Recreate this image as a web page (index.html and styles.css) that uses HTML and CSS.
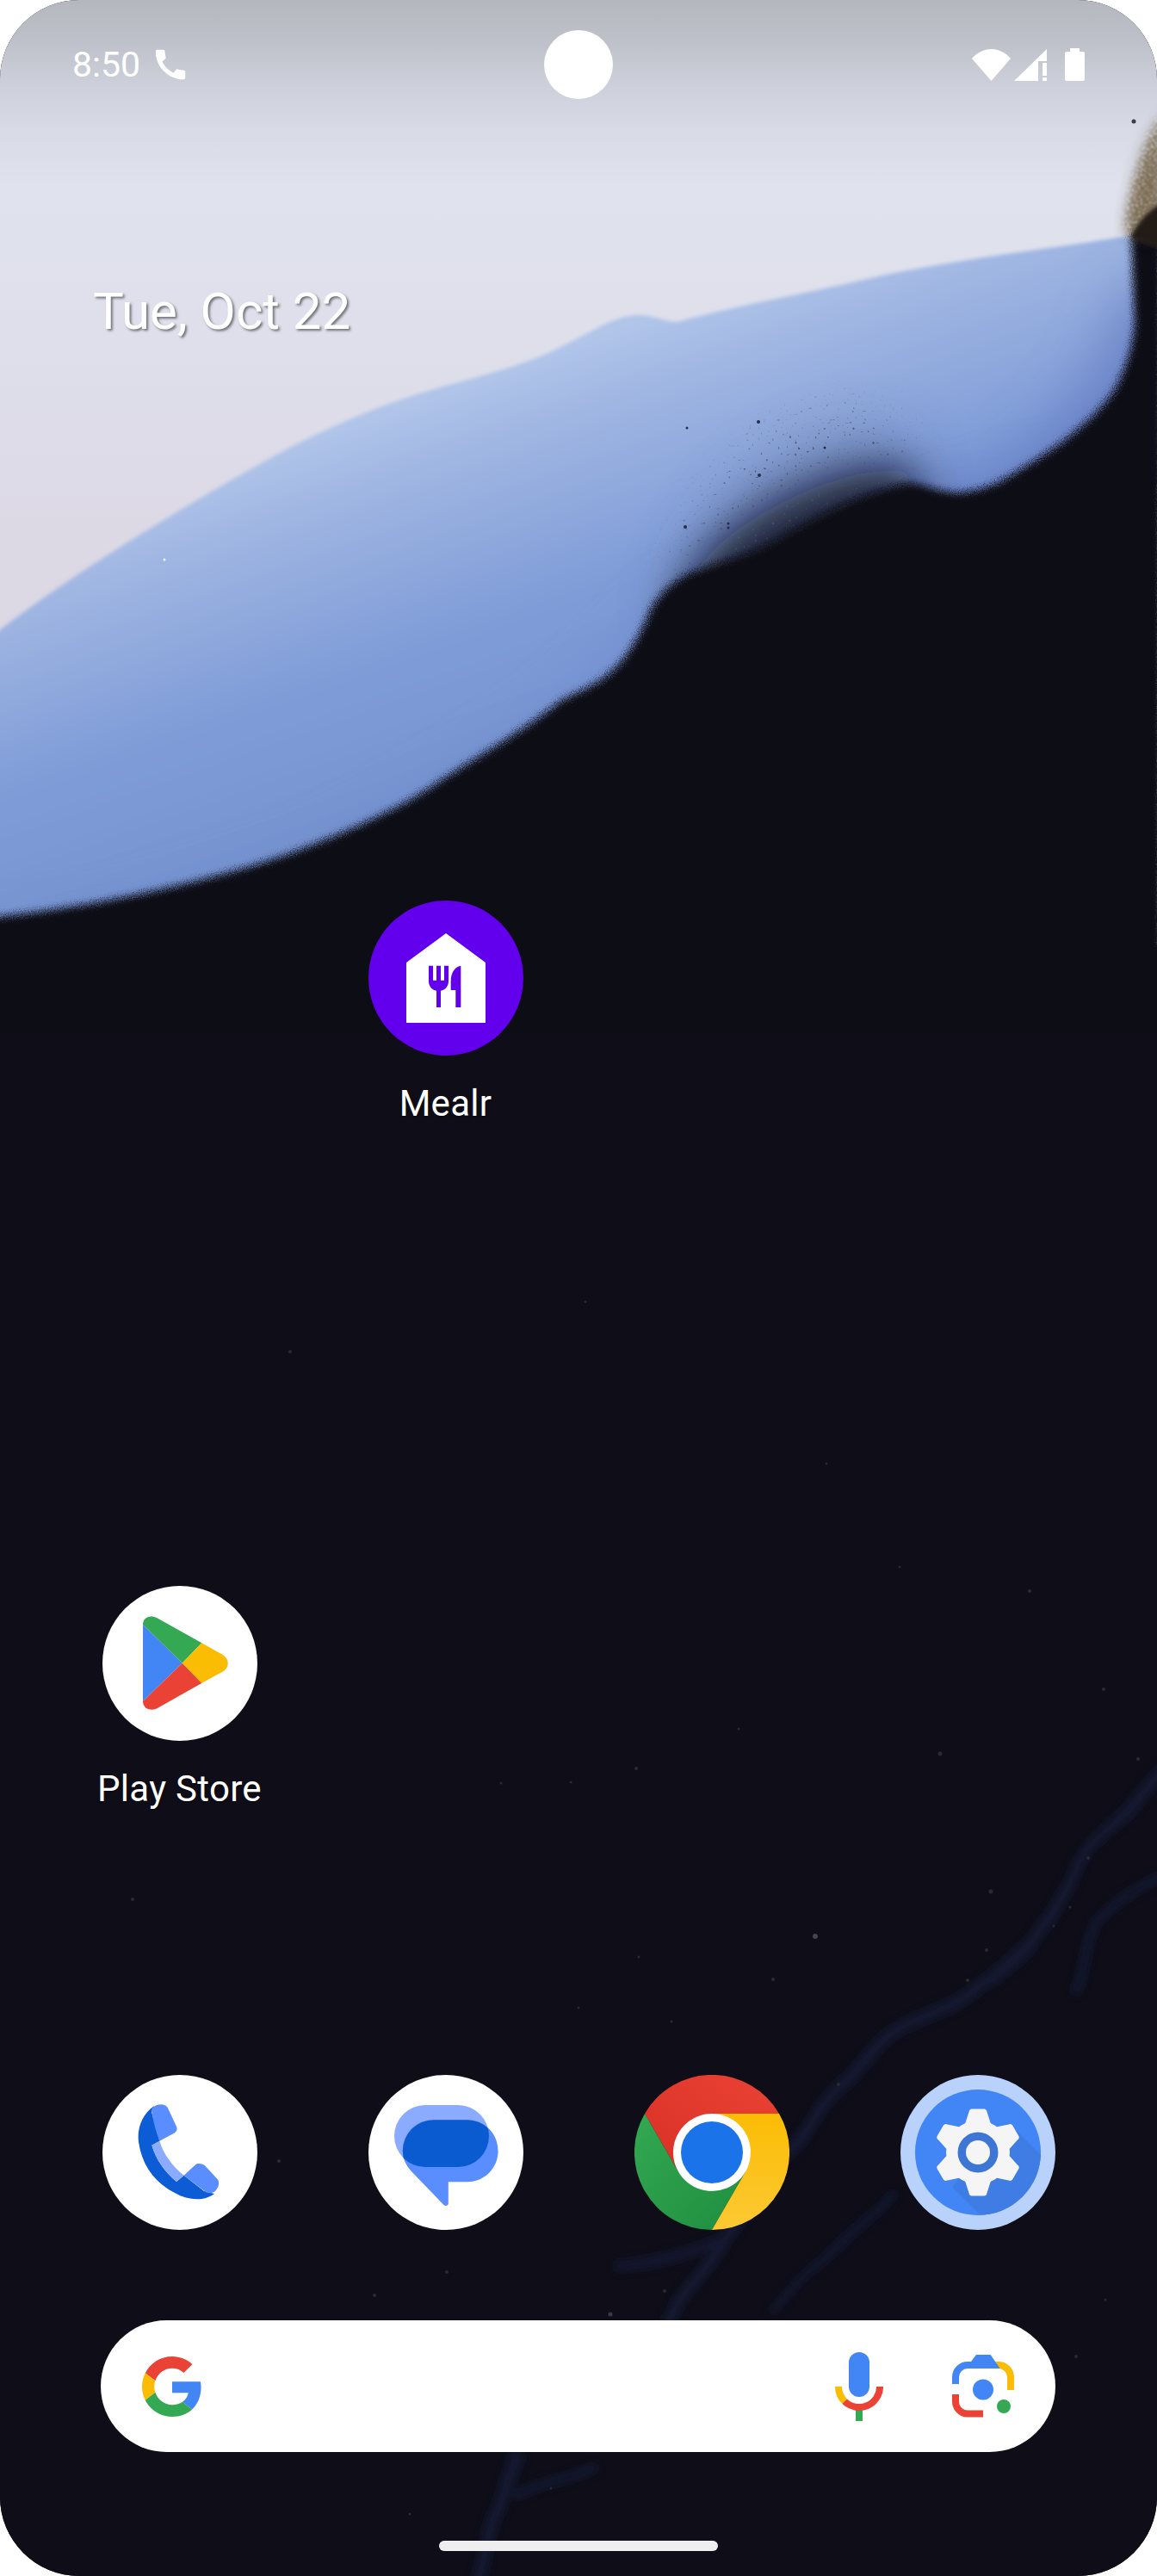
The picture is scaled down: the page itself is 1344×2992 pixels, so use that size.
FILE: index.html
```html
<!DOCTYPE html>
<html lang="en">
  <head>
    <meta charset="UTF-8" />
    <title>Home screen</title>
    <link rel="stylesheet" href="styles.css">
  </head>
  <body>
    <div class="phone">
      <svg class="wallpaper" width="1344" height="2992" viewBox="0 0 1344 2992">
        <defs>
          <linearGradient id="skyFill" gradientUnits="userSpaceOnUse" x1="0" y1="0" x2="0" y2="1100">
            <stop offset="0" stop-color="#b5b7bf" />
            <stop offset="0.045" stop-color="#bfc1ca" />
            <stop offset="0.09" stop-color="#cdcfda" />
            <stop offset="0.136" stop-color="#d8dae6" />
            <stop offset="0.2" stop-color="#e0e2ee" />
            <stop offset="0.36" stop-color="#dedfeb" />
            <stop offset="0.6" stop-color="#dcd8e4" />
            <stop offset="1" stop-color="#d8d4e2" />
          </linearGradient>
          <linearGradient id="blueFill" gradientUnits="userSpaceOnUse" x1="650" y1="405" x2="848" y2="970">
            <stop offset="0" stop-color="#b1c5e9" />
            <stop offset="0.13" stop-color="#a0b6e2" />
            <stop offset="0.46" stop-color="#7f9cd8" />
            <stop offset="1" stop-color="#6f8cc8" />
          </linearGradient>
          <filter id="soft" x="-5%" y="-5%" width="110%" height="110%">
            <feGaussianBlur stdDeviation="2" />
          </filter>
          <filter id="wide" x="-20%" y="-20%" width="140%" height="140%">
            <feGaussianBlur stdDeviation="34" />
          </filter>
          <filter id="haze" x="-30%" y="-30%" width="160%" height="160%">
            <feGaussianBlur stdDeviation="24" />
          </filter>
          <filter id="fringe" x="-60%" y="-30%" width="220%" height="160%">
            <feGaussianBlur stdDeviation="12" />
          </filter>
          <filter id="mist" x="-50%" y="-50%" width="200%" height="200%">
            <feGaussianBlur stdDeviation="40" />
          </filter>
          <filter id="grain" x="-5%" y="-5%" width="110%" height="110%">
            <feGaussianBlur stdDeviation="4" result="b" />
            <feTurbulence type="fractalNoise" baseFrequency="0.9" numOctaves="2" seed="4" result="n" />
            <feDisplacementMap in="b" in2="n" scale="10" />
          </filter>
          <filter id="dust" x="-40%" y="-40%" width="180%" height="180%">
            <feGaussianBlur in="SourceGraphic" stdDeviation="22" result="m" />
            <feTurbulence type="fractalNoise" baseFrequency="0.3" numOctaves="1" seed="3" />
            <feColorMatrix values="0 0 0 0 0.08  0 0 0 0 0.09  0 0 0 0 0.16  11 0 0 0 -7.4" result="s" />
            <feComposite in="s" in2="m" operator="in" />
            <feGaussianBlur stdDeviation="0.7" />
          </filter>
          <filter id="brownDust" x="-60%" y="-30%" width="220%" height="160%">
            <feGaussianBlur in="SourceGraphic" stdDeviation="6" result="m" />
            <feTurbulence type="fractalNoise" baseFrequency="0.4" numOctaves="2" seed="7" />
            <feColorMatrix values="0 0 0 0 0.2  0 0 0 0 0.15  0 0 0 0 0.08  9 0 0 0 -3.3" result="s" />
            <feComposite in="s" in2="m" operator="in" />
            <feGaussianBlur stdDeviation="0.8" />
          </filter>
          <filter id="streak" x="-20%" y="-20%" width="140%" height="140%">
            <feTurbulence type="fractalNoise" baseFrequency="0.012" numOctaves="1" seed="12" result="n" />
            <feDisplacementMap in="SourceGraphic" in2="n" scale="14" />
            <feGaussianBlur stdDeviation="5" />
          </filter>
          <clipPath id="blueClip">
            <path d="M-40 763 C60 680 210 590 300 540 C370 500 440 470 514 449 C570 434 620 420 651 403 C690 385 710 368 740 366 C760 365 775 376 790 373 C860 354 950 338 1029 319 C1130 298 1230 288 1316 273 L1344 270 V560 L1000 1000 L-40 1120 Z" />
          </clipPath>
        </defs>

        <rect x="0" y="0" width="1344" height="1100" fill="url(#skyFill)" />
        <path filter="url(#soft)" fill="url(#blueFill)" d="M-40 763 C60 680 210 590 300 540 C370 500 440 470 514 449 C570 434 620 420 651 403 C690 385 710 368 740 366 C760 365 775 376 790 373 C860 354 950 338 1029 319 C1130 298 1230 288 1316 273 L1344 270 V560 L1000 1000 L-40 1120 Z" />

        <g clip-path="url(#blueClip)">
          <path filter="url(#wide)" fill="#5672c2" opacity="0.25" d="M-60 1100 C60 1090 230 1040 343 1000 C420 970 560 890 651 824 L780 700 L1029 600 L1400 500 L1400 1200 L-60 1200 Z" />
          <path filter="url(#wide)" fill="#5f74bc" opacity="0.7" d="M1020 560 L1130 570 C1190 540 1260 470 1290 400 L1310 340 L1400 330 L1400 700 L1020 700 Z" />
          <path filter="url(#mist)" fill="#2a3358" opacity="0.36" d="M790 700 C820 620 880 520 1040 510 L1060 600 L800 740 Z" />
          <path filter="url(#haze)" fill="#0f0e18" opacity="0.8" d="M785 720 C795 670 830 630 880 600 C930 570 990 545 1050 545 L1085 620 L820 780 Z" />
          <path filter="url(#dust)" fill="#000" d="M780 640 L860 520 L960 470 L1040 480 L1060 540 L900 620 L800 700 Z" />
        </g>

        <path filter="url(#grain)" fill="#0f0e18" d="M-40 1068 C60 1062 230 1030 343 989 C420 960 480 930 514 905 C570 870 620 840 651 814 C680 800 700 790 711 779 C728 765 745 735 754 712 C762 695 775 682 790 672 C815 658 850 652 885 636 C930 612 985 578 1050 562 C1065 558 1090 574 1117 572 C1135 570 1150 565 1164 558 C1195 540 1222 522 1241 508 C1265 488 1285 470 1298 447 C1310 422 1318 395 1318 370 L1314 273 L1350 240 V1300 H-40 Z" />
        <rect x="0" y="1200" width="1344" height="1792" fill="#0f0e18" />

        <path filter="url(#fringe)" fill="#5c4a30" opacity="0.6" d="M1350 150 C1335 175 1322 220 1316 268 L1350 268 Z" />
        <path filter="url(#brownDust)" fill="#000" d="M1350 130 C1330 165 1312 215 1306 270 L1350 280 Z" />
        <path filter="url(#soft)" fill="#241c13" d="M1350 235 C1335 245 1322 256 1314 276 L1350 290 Z" />
        <circle cx="1317" cy="141" r="2.5" fill="#3c3c42" />

        <g fill="#252c4c">
          <circle cx="796" cy="612" r="2" />
          <circle cx="846" cy="608" r="1.5" />
          <circle cx="881" cy="490" r="2" />
          <circle cx="798" cy="497" r="1.5" />
          <circle cx="882" cy="552" r="2" />
          <circle cx="846" cy="613" r="1.5" />
          <circle cx="958" cy="520" r="1.5" />
        </g>
        <circle cx="191" cy="650" r="1.5" fill="#eef0f8" />

        <g fill="none" stroke="#141a3a" opacity="0.75" filter="url(#streak)">
          <path stroke-width="14" d="M1360 2050 C1310 2100 1270 2140 1253 2165 C1230 2210 1210 2240 1200 2253 C1170 2285 1140 2300 1119 2316 C1085 2340 1050 2355 1027 2373 C1000 2395 990 2415 973 2430 C950 2455 935 2480 920 2494 C890 2530 865 2575 844 2601 C825 2630 805 2650 790 2671 L772 2700" />
          <path stroke-width="10" d="M1360 2170 C1330 2195 1295 2215 1275 2234 C1262 2260 1255 2290 1248 2315" />
          <path stroke-width="8" d="M1200 2262 C1180 2280 1165 2295 1146 2304" />
          <path stroke-width="8" d="M1038 2544 C1010 2575 975 2610 947 2633 C930 2650 910 2670 893 2683" />
          <path stroke-width="12" d="M844 2601 C800 2615 760 2625 715 2633" />
          <path stroke-width="16" d="M603 2848 C590 2880 580 2910 570 2937 C565 2955 560 2975 552 2996" />
          <path stroke-width="10" d="M597 2899 C625 2885 655 2878 690 2862" />
        </g>

        <g fill="#2a2a34">
          <circle cx="337" cy="1570" r="2" />
          <circle cx="680" cy="1512" r="1.5" />
          <circle cx="960" cy="1700" r="1.5" />
          <circle cx="1045" cy="1820" r="1.5" />
          <circle cx="1196" cy="1848" r="2" />
          <circle cx="1282" cy="1962" r="2" />
          <circle cx="1092" cy="2037" r="2.5" />
          <circle cx="1322" cy="2043" r="2" />
          <circle cx="858" cy="2008" r="1.5" />
          <circle cx="739" cy="2054" r="2" />
          <circle cx="582" cy="2071" r="1.5" />
          <circle cx="663" cy="2070" r="1.5" />
          <circle cx="1264" cy="2158" r="2" />
          <circle cx="1151" cy="2197" r="2.5" />
          <circle cx="1243" cy="2215" r="1.5" />
          <circle cx="1224" cy="2237" r="1.5" />
          <circle cx="154" cy="2206" r="2" />
          <circle cx="947" cy="2249" r="3" fill="#44444e" />
          <circle cx="1146" cy="2265" r="2" />
          <circle cx="742" cy="2273" r="1.5" />
          <circle cx="898" cy="2299" r="2" />
          <circle cx="1124" cy="2300" r="2" />
          <circle cx="672" cy="2332" r="1.5" />
          <circle cx="780" cy="2348" r="1.5" />
          <circle cx="974" cy="2421" r="2" />
          <circle cx="324" cy="2510" r="2" />
          <circle cx="265" cy="2530" r="1.5" />
          <circle cx="519" cy="2639" r="2" />
          <circle cx="772" cy="2661" r="2" />
          <circle cx="435" cy="2666" r="2" />
          <circle cx="1284" cy="2671" r="1.5" />
          <circle cx="709" cy="2688" r="2.5" fill="#3a3a44" />
          <circle cx="1250" cy="2737" r="2" />
          <circle cx="640" cy="2890" r="1.5" />
          <circle cx="476" cy="2920" r="1.5" />
        </g>
      </svg>

      <div class="statusbar">
        <div class="statusLeft">
          <span class="clock">8:50</span>
          <svg class="callIcon" width="46" height="46" viewBox="0 0 24 24">
            <path fill="#fff" d="M20.01 15.38c-1.23 0-2.42-.2-3.53-.56-.35-.12-.74-.03-1.01.24l-1.57 1.97c-2.83-1.35-5.48-3.9-6.89-6.83l1.95-1.66c.27-.28.35-.67.24-1.02-.37-1.11-.56-2.3-.56-3.53 0-.54-.45-.99-.99-.99H4.19C3.65 3 3 3.24 3 3.99 3 13.28 10.73 21 20.01 21c.71 0 .99-.63.99-1.18v-3.45c0-.54-.45-.99-.99-.99z" />
          </svg>
        </div>
        <div class="statusRight">
          <svg class="wifiIcon" width="45" height="37" viewBox="0 0 45 37">
            <path fill="#fff" d="M22.5 37L0 11C6 4 14 0 22.5 0C31 0 39 4 45 11Z" />
          </svg>
          <svg class="signalIcon" width="38" height="37" viewBox="0 0 38 37">
            <path fill="#fff" d="M0 37L38 0V14H28V37Z" />
            <rect fill="#fff" x="33" y="16" width="5" height="15" />
            <rect fill="#fff" x="33" y="33" width="5" height="4" />
          </svg>
          <svg class="batteryIcon" width="23" height="38" viewBox="0 0 23 38">
            <path fill="#fff" d="M6 0H17V4H21A2 2 0 0 1 23 6V36A2 2 0 0 1 21 38H2A2 2 0 0 1 0 36V6A2 2 0 0 1 2 4H6Z" />
          </svg>
        </div>
      </div>
      <div class="cameraHole"></div>

      <div class="date">Tue, Oct 22</div>

      <div class="workspace">
        <div class="app mealrCell">
          <svg class="appIcon" width="180" height="180" viewBox="0 0 180 180">
            <circle cx="90" cy="90" r="90" fill="#6200ee" />
            <path fill="#fff" d="M90 38L136 72V142H44V72Z" />
            <path fill="#6200ee" d="M70 75.7h5v17h4v-17h5v17h4v-17h5v18c0 6-4 10-9 11V124h-5V104.7c-5-1-9-5-9-11Z" />
            <path fill="#6200ee" d="M107.3 75.7V124h-6V104h-5.6V94C95.7 84 100 77 107.3 75.7Z" />
          </svg>
          <div class="appLabel">Mealr</div>
        </div>
        <div class="app playCell">
          <svg class="appIcon" width="180" height="180" viewBox="0 0 180 180">
            <circle cx="90" cy="90" r="90" fill="#fff" />
            <path fill="#4285f4" d="M47 44.7L92.7 89.7L47 134Z" />
            <path fill="#34a853" d="M47 44.7C47 37 55 33 63 37L115.3 66.3L92.7 89.7Z" />
            <path fill="#fbbc04" d="M115.3 66.3L139 79.5C148 85 148 95 139 100L115.3 113L92.7 89.7Z" />
            <path fill="#ea4335" d="M92.7 89.7L115.3 113L63 142.5C55 146 47 142 47 134Z" />
          </svg>
          <div class="appLabel">Play Store</div>
        </div>
      </div>

      <div class="dock">
        <div class="app">
          <svg class="appIcon" width="180" height="180" viewBox="0 0 180 180">
            <circle cx="90" cy="90" r="90" fill="#fff" />
            <path fill="#0b5cd5" d="M60 36C46 46 40 62 42 78C46 106 62 126 84 137C100 146 118 147 130 138L118 135L94.6 116.7L86 124C72 112 62 98 57.4 81.7L66.4 76.7L57 43Z" />
            <path fill="#8aabff" d="M57.4 81.7L66.4 76.7C70 90 80 105 94.6 116.7L86 124C72 112 62 98 57.4 81.7Z" />
            <path fill="#5a8dff" d="M57.4 43C56 38 62 34 68.8 34.3C72 34.5 74.5 36 75.7 38L86 60C87.5 64 85.5 66.5 82.6 68L66.4 76.7C62 66 59 54 57.4 43Z" />
            <path fill="#5a8dff" d="M94.6 116.7L108.4 104C111 102 116 103 118.7 105L134.2 121.7C136 125 135 130 132.5 133C130 137 125.6 138 122 137C120 136.5 118.7 135 118.7 135Z" />
          </svg>
        </div>
        <div class="app">
          <svg class="appIcon" width="180" height="180" viewBox="0 0 180 180">
            <defs>
              <clipPath id="bubbleClip">
                <rect x="30" y="35" width="110" height="72" rx="36" />
              </clipPath>
            </defs>
            <circle cx="90" cy="90" r="90" fill="#fff" />
            <rect x="30" y="35" width="110" height="72" rx="36" fill="#8aabff" />
            <path fill="#5a8dff" d="M75 52.3H115C135 52.3 150.6 68 150.6 88.3C150.6 108 135 124.3 115 124.3H92.8V149C92.8 152 89 153 87 150.5L50.8 113C44 106 39.8 98 39.8 88.3C39.8 68 55 52.3 75 52.3Z" />
            <g clip-path="url(#bubbleClip)">
              <rect x="39.8" y="52.3" width="110.8" height="72" rx="36" fill="#0a5bd0" />
            </g>
          </svg>
        </div>
        <div class="app">
          <svg class="appIcon" width="180" height="180" viewBox="0 0 180 180">
            <defs>
              <linearGradient id="chromeRed" x1="0" y1="1" x2="1" y2="0">
                <stop offset="0" stop-color="#d93025" />
                <stop offset="1" stop-color="#ea4335" />
              </linearGradient>
              <linearGradient id="chromeGreen" x1="0" y1="0" x2="1" y2="1">
                <stop offset="0" stop-color="#34a853" />
                <stop offset="1" stop-color="#1e8e3e" />
              </linearGradient>
              <linearGradient id="chromeYellow" x1="0" y1="0" x2="0" y2="1">
                <stop offset="0" stop-color="#fbbc04" />
                <stop offset="1" stop-color="#fcc934" />
              </linearGradient>
            </defs>
            <path fill="url(#chromeRed)" d="M90 45H168A90 90 0 0 0 12 45L51 112.5Z" />
            <path fill="url(#chromeGreen)" d="M12 45A90 90 0 0 0 90 180L129 112.5H51Z" />
            <path fill="url(#chromeYellow)" d="M168 45A90 90 0 0 1 90 180L129 112.5L90 45Z" />
            <circle cx="90" cy="90" r="45" fill="#fff" />
            <circle cx="90" cy="90" r="36" fill="#1a73e8" />
          </svg>
        </div>
        <div class="app">
          <svg class="appIcon" width="180" height="180" viewBox="0 0 180 180">
            <defs>
              <clipPath id="discClip"><circle cx="90" cy="90" r="73" /></clipPath>
              <path id="gearTooth" d="M-15-33L-10.5-47Q-10-50.5-7-50.5H7Q10-50.5 10.5-47L15-33Z" />
            </defs>
            <circle cx="90" cy="90" r="90" fill="#b8d2fb" />
            <circle cx="90" cy="90" r="73" fill="#4285f4" />
            <g clip-path="url(#discClip)">
              <path fill="#3f7de4" d="M125 55L200 130L130 200L60 130Z" />
            </g>
            <g transform="translate(90 90)" fill="#f5f5f5">
              <circle r="37" />
              <use href="#gearTooth" />
              <use href="#gearTooth" transform="rotate(60)" />
              <use href="#gearTooth" transform="rotate(120)" />
              <use href="#gearTooth" transform="rotate(180)" />
              <use href="#gearTooth" transform="rotate(240)" />
              <use href="#gearTooth" transform="rotate(300)" />
              <circle r="23.5" fill="#3e76d6" />
              <circle r="14" />
            </g>
          </svg>
        </div>
      </div>

      <div class="searchBar">
        <svg class="googleLogo" width="70" height="72" viewBox="0 0 48 48">
          <path fill="#ea4335" d="M24 9.5c3.54 0 6.71 1.22 9.21 3.6l6.85-6.85C35.9 2.38 30.47 0 24 0 14.62 0 6.51 5.38 2.56 13.22l7.98 6.19C12.43 13.72 17.74 9.5 24 9.5z" />
          <path fill="#4285f4" d="M46.98 24.55c0-1.57-.15-3.09-.38-4.55H24v9.02h12.94c-.58 2.96-2.26 5.48-4.78 7.18l7.73 6c4.51-4.18 7.09-10.36 7.09-17.65z" />
          <path fill="#fbbc05" d="M10.53 28.59c-.5-1.45-.78-2.99-.78-4.59s.27-3.14.78-4.59l-7.98-6.19C.92 16.46 0 20.12 0 24c0 3.88.92 7.54 2.56 10.78l7.97-6.19z" />
          <path fill="#34a853" d="M24 48c6.48 0 11.93-2.13 15.89-5.81l-7.73-6c-2.15 1.45-4.92 2.3-8.16 2.3-6.26 0-11.57-4.22-13.47-9.91l-7.98 6.19C6.51 42.62 14.62 48 24 48z" />
        </svg>
        <svg class="micIcon" width="56" height="80" viewBox="0 0 56 80">
          <rect x="16" y="0" width="24" height="52" rx="12" fill="#4285f4" />
          <rect x="24" y="66" width="8" height="14" fill="#34a853" />
          <path fill="none" stroke="#ea4335" stroke-width="8" d="M11 57A24 24 0 0 0 52 40" />
          <path fill="none" stroke="#fbbc04" stroke-width="8" d="M4 40A24 24 0 0 0 11 57" />
        </svg>
        <svg class="lensIcon" width="72" height="73" viewBox="0 0 72 73">
          <path fill="none" stroke="#fbbc04" stroke-width="8" d="M50 12H54A14 14 0 0 1 68 26V41" />
          <path fill="none" stroke="#4285f4" stroke-width="8" d="M4 34V26A14 14 0 0 1 18 12H40" />
          <path fill="#4285f4" d="M22 8L28 0H44.6L55.7 16H22Z" />
          <path fill="none" stroke="#ea4335" stroke-width="8" d="M4 46V54A14 14 0 0 0 18 68.5H36" />
          <circle cx="36" cy="40.5" r="12" fill="#4285f4" />
          <circle cx="60" cy="60" r="8" fill="#34a853" />
        </svg>
      </div>

      <div class="gestureBar"></div>
    </div>
  </body>
</html>
```

FILE: styles.css
```css
html,
body {
  margin: 0;
  padding: 0;
  background-color: #fff;
}

svg {
  display: block;
}

.phone {
  position: relative;
  width: 1344px;
  height: 2992px;
  overflow: hidden;
  border-radius: 92px;
  background-color: #0f0e18;
  font-family: Roboto, 'Noto Sans', sans-serif;
  color: #fff;
}

.wallpaper {
  position: absolute;
  top: 0;
  left: 0;
}

.statusbar {
  position: relative;
  display: flex;
  justify-content: space-between;
  align-items: center;
  height: 150px;
  padding: 0 84px;
  box-sizing: border-box;
}

.statusLeft {
  display: flex;
  align-items: center;
  gap: 12px;
}

.statusRight {
  display: flex;
  align-items: center;
}

.clock {
  font-size: 41px;
  line-height: 46px;
}

.wifiIcon {
  margin-right: 4px;
}

.signalIcon {
  margin-right: 21px;
}

.cameraHole {
  position: absolute;
  top: 35px;
  left: 632px;
  width: 80px;
  height: 80px;
  border-radius: 50%;
  background-color: #fff;
}

.date {
  position: relative;
  margin-top: 177px;
  padding-left: 108px;
  font-size: 60px;
  line-height: 70px;
  text-shadow: 2px 2px 3px rgba(0, 0, 0, 0.5);
}

.workspace {
  position: relative;
  display: grid;
  grid-template-columns: repeat(4, 309px);
  grid-auto-rows: 398px;
  margin-top: 649px;
  padding: 0 54px;
}

.mealrCell {
  grid-column: 2;
  grid-row: 1;
}

.playCell {
  grid-column: 1;
  grid-row: 3;
}

.dock {
  position: relative;
  display: grid;
  grid-template-columns: repeat(4, 309px);
  margin-top: 170px;
  padding: 0 54px;
  height: 180px;
}

.app {
  display: flex;
  flex-direction: column;
  align-items: center;
}

.appLabel {
  margin-top: 31px;
  font-size: 42px;
  line-height: 50px;
  letter-spacing: 0.3px;
  text-shadow: 0 1px 3px rgba(0, 0, 0, 0.5);
}

.searchBar {
  position: relative;
  display: flex;
  align-items: center;
  width: 1109px;
  height: 153px;
  margin: 105px 0 0 117px;
  padding: 0 48px;
  box-sizing: border-box;
  border-radius: 77px;
  background-color: #fff;
}

.micIcon {
  margin-left: auto;
  margin-right: 80px;
}

.gestureBar {
  position: relative;
  width: 324px;
  height: 12px;
  margin: 103px auto 0;
  border-radius: 6px;
  background-color: #eee;
}
```
